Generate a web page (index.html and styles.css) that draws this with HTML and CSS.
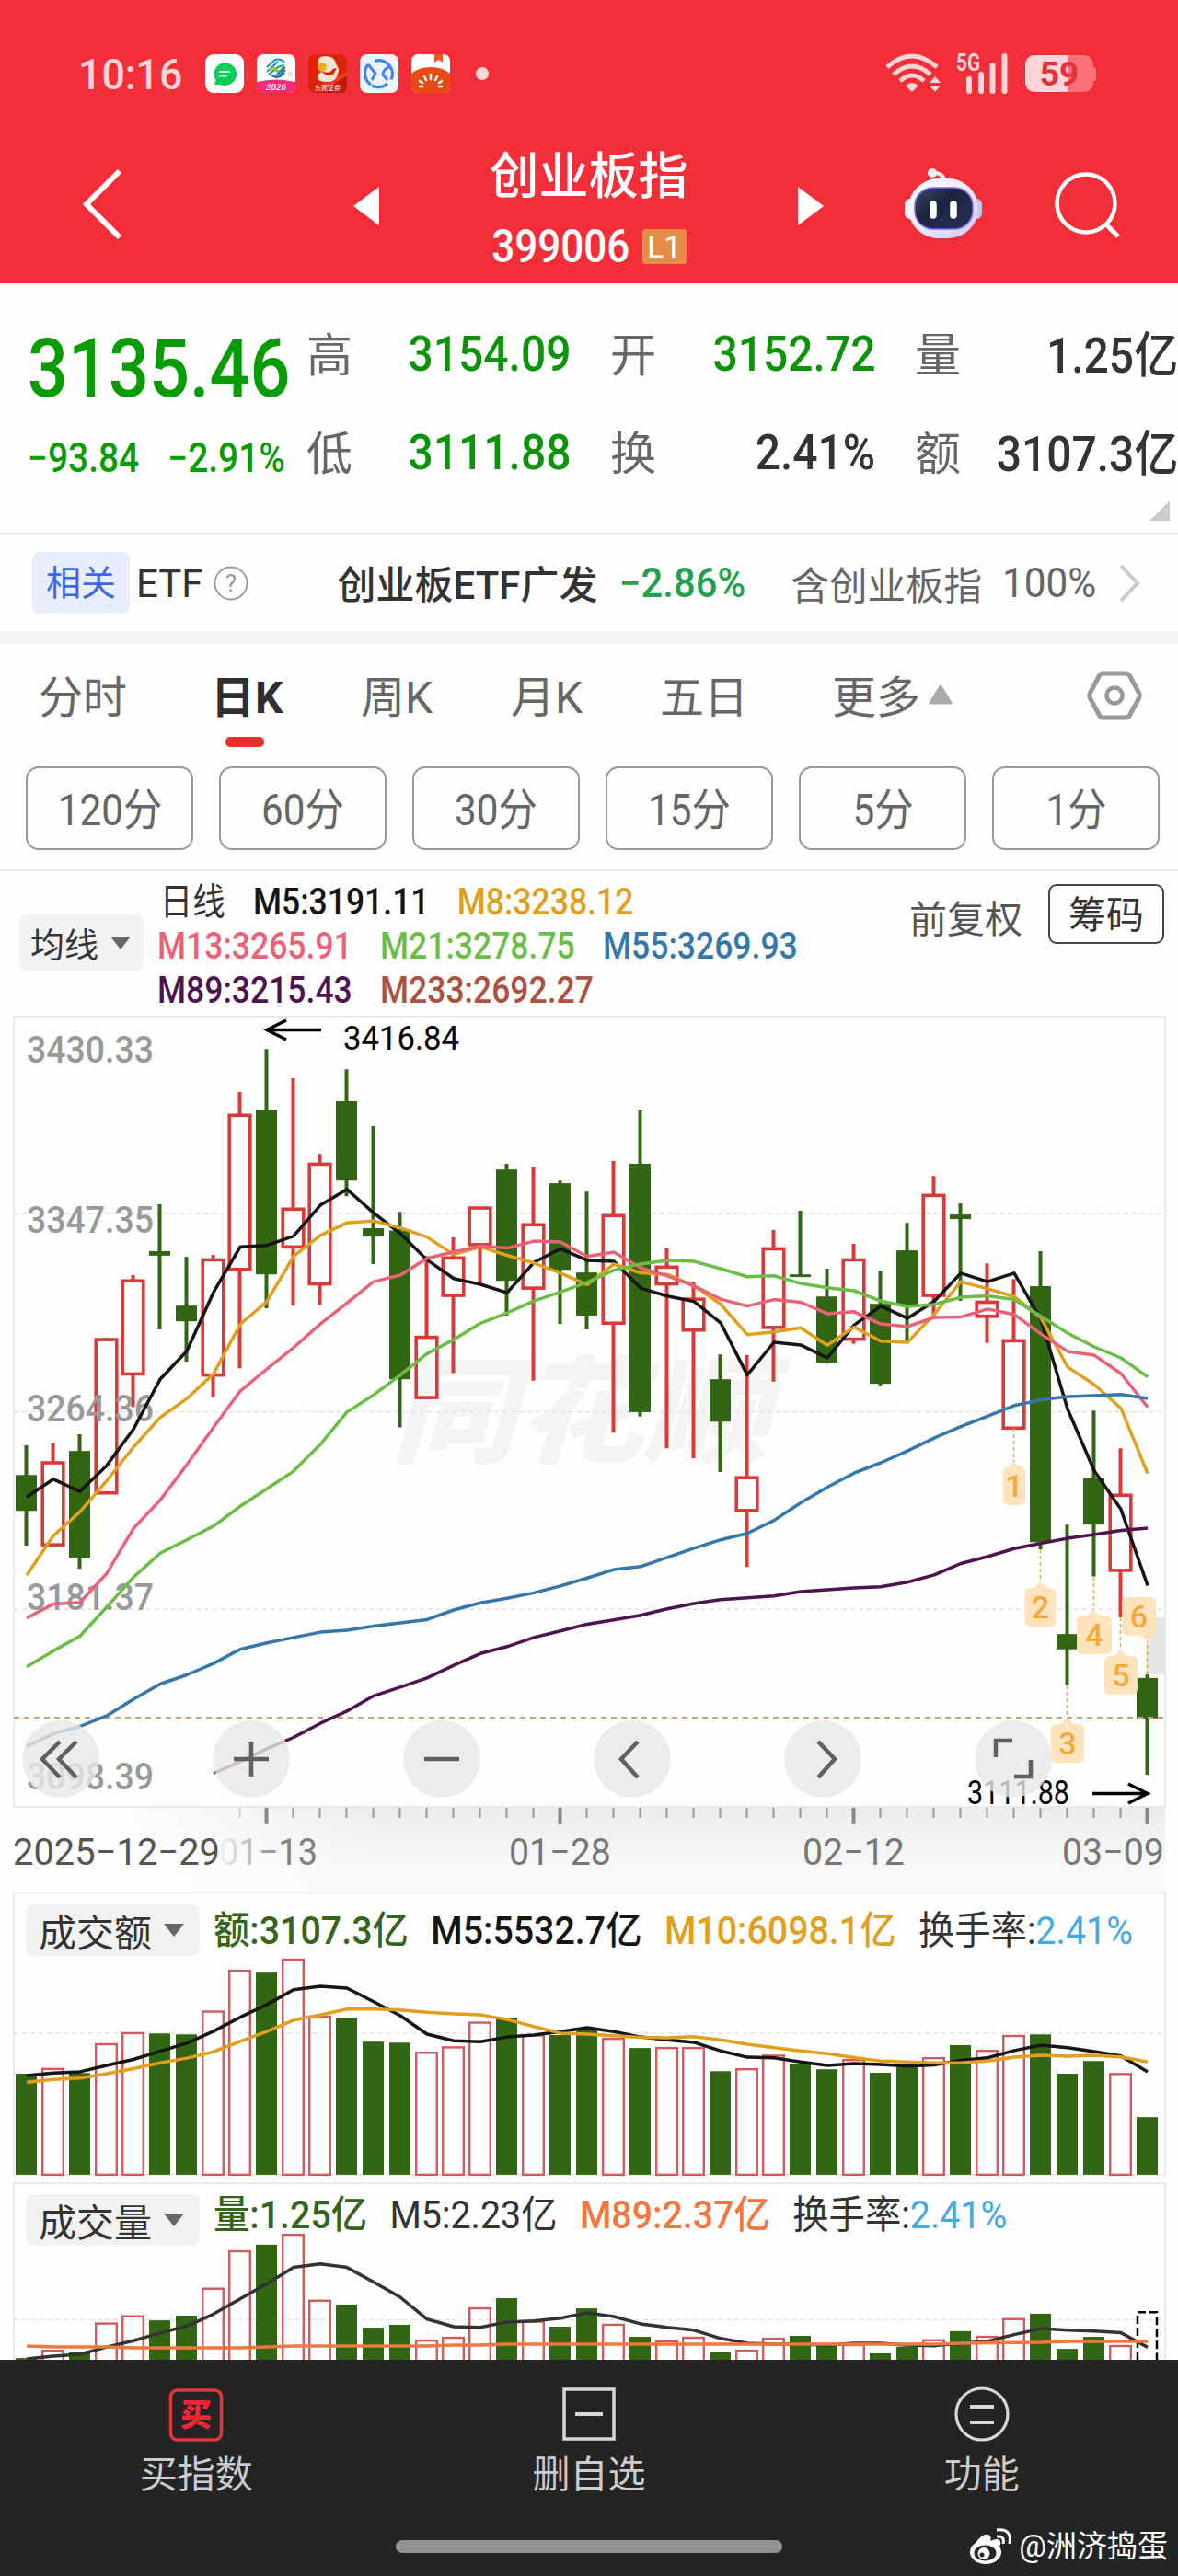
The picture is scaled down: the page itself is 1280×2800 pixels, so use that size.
FILE: index.html
```html
<!DOCTYPE html>
<html lang="zh-CN">
<head>
    <meta charset="UTF-8">
    <meta name="viewport" content="width=device-width, initial-scale=1.0">
    <title>创业板指 399006</title>
    <link rel="stylesheet" href="styles.css">
</head>
<body>
    <header class="header">
        <div class="status-bar">
            <span class="clock">10:16</span>
            <div class="app-icons">
                <svg viewBox="0 0 42 42"><rect width="42" height="42" rx="9" fill="#fff"/><path d="M21 9a13 12.500 0 1 1-5 24l-6 0 1.500-5A13 12.500 0 0 1 21 9z" fill="#08cf57"/><path d="M15 19h12M15 23.500h9" stroke="#c9f5d9" stroke-width="1.800"/></svg>
                <svg viewBox="0 0 42 42"><rect width="42" height="42" rx="7" fill="#fff"/><path d="M0 30q21-5 42 0v5q0 7-7 7H7q-7 0-7-7z" fill="#f52a78"/><g fill="none" stroke-width="2"><path d="M11 14l9-8q6-2 10 3M11 19l12-11M13 22l5-4q6-6 12-6" stroke="#1a8fc4"/><path d="M14 18q4-6 7-1t8-4" stroke="#8cc63f" stroke-width="3"/><path d="M31 14l-12 11M30 20q-6 8-14 3M31 17l-8 8" stroke="#1f6fb5"/></g><circle cx="7" cy="7" r="3" fill="none" stroke="#f9a9c4" stroke-dasharray="1 1"/><circle cx="36" cy="22" r="2" fill="none" stroke="#f9a9c4"/><text x="21" y="39" class="ico-year">2026</text></svg>
                <svg viewBox="0 0 42 42"><rect width="42" height="42" rx="7" fill="#dd2408"/><path d="M12 42L42 20v15q0 7-7 7z" fill="#c01a08"/><path d="M14 33L42 19v4L22 36z" fill="#ee3a20"/><path d="M11 13q-3-11 8-11 9 0 11 8l2 4q2 3 0 7-1 9-12 9-10 0-10-6 0-3 5-5 5 6 12 3l4-7q-4 0-7 4-8 3-13-6z" fill="#f6e5d3"/><circle cx="15" cy="14" r="5" fill="#f3ad1c"/><text x="21" y="39" class="ico-brand">东莞证券</text></svg>
                <svg viewBox="0 0 42 42"><rect width="42" height="42" rx="8" fill="#f0f4fc"/><path d="M9 11a15 15 0 0 0 3 22M16 7.500a15 14.500 0 0 1 18 20M30 32a15 15 0 0 1-17 2" fill="none" stroke="#3f86ea" stroke-width="3.200"/><path d="M9 11l8 10-4 7M34 13q-8 2-9 9l5 6" fill="none" stroke="#3f86ea" stroke-width="3"/></svg>
                <svg viewBox="0 0 42 42"><rect width="42" height="42" rx="7" fill="#fff"/><path d="M0 21q8-7 21-7t21 7v14q0 7-7 7H7q-7 0-7-7z" fill="#e84c16"/><path d="M25 0h9v9l-4.500-3L25 9z" fill="#ec5a20"/><path d="M21 22v5M14 24l2 4M28 24l-2 4M9 29l3 2M33 29l-3 2M9 35h3M30 35h3" stroke="#fff" stroke-width="2.500" stroke-linecap="round"/></svg>
                <i class="more-dot"></i>
            </div>
            <div class="status-right">
                <svg class="wifi" viewBox="0 0 60 42"><g fill="none" stroke="#ffd5d8" stroke-width="5"><path d="M2 14q27-24 54 0"/><path d="M9 22q20-18 40 0"/><path d="M16 29q13-12 26 0"/></g><path d="M22 34q7-6 14 0l-7 7z" fill="#ffd5d8"/><path d="M48 31l6-7 6 7zM48 34h12l-6 7z" fill="#ffd5d8"/></svg>
                <svg class="signal" viewBox="0 0 56 44"><text x="0" y="19" textLength="26" lengthAdjust="spacingAndGlyphs" class="net">5G</text><path d="M14 28v13M27 23v18M39.500 13v28M52.500 3v38" stroke="#ffd5d8" stroke-width="6" stroke-linecap="round"/></svg>
                <div class="battery">59</div>
            </div>
        </div>
        <div class="nav">
            <svg class="nav-back" viewBox="0 0 46 80"><path d="M42 4L6 40l36 36" fill="none" stroke="#fff" stroke-width="6"/></svg>
            <svg class="nav-prev" viewBox="0 0 28 42"><path d="M28 0v42L0 21z" fill="#fff"/></svg>
            <div class="title">
                <h1>创业板指</h1>
                <div class="code"><span>399006</span><em>L1</em></div>
            </div>
            <svg class="nav-next" viewBox="0 0 28 42"><path d="M0 0v42l28-21z" fill="#fff"/></svg>
            <svg class="robot" viewBox="0 0 84 78">
                <defs>
                    <linearGradient id="shell" x1="0" y1="0" x2="1" y2="1"><stop offset="0" stop-color="#fff"/><stop offset=".5" stop-color="#eceaff"/><stop offset="1" stop-color="#c9c8f4"/></linearGradient>
                    <linearGradient id="visor" x1="0" y1="0" x2="1" y2="1"><stop offset="0" stop-color="#3e4a66"/><stop offset=".4" stop-color="#1c2540"/><stop offset="1" stop-color="#26305a"/></linearGradient>
                </defs>
                <path d="M31 6q12 0 12 10" fill="none" stroke="#e9e4fa" stroke-width="4"/><circle cx="30" cy="6" r="5" fill="#f4effc"/>
                <rect x="0" y="34" width="14" height="22" rx="6" fill="#f2f0ff"/><rect x="70" y="34" width="14" height="22" rx="6" fill="#c3c3ee"/>
                <rect x="4" y="12" width="76" height="65" rx="33" fill="url(#shell)"/>
                <rect x="11" y="22" width="63" height="45" rx="20" fill="url(#visor)" stroke="#7b6be0" stroke-width="1.500"/>
                <path d="M31 40v12M53 40v12" stroke="#fff" stroke-width="7.500" stroke-linecap="round"/>
            </svg>
            <svg class="search" viewBox="0 0 76 76"><circle cx="36" cy="35" r="31.500" fill="none" stroke="#fff" stroke-width="4.500"/><path d="M57 57l14 14" stroke="#fff" stroke-width="5"/></svg>
        </div>
    </header>

    <section class="quote">
        <div class="price">
            <strong>3135.46</strong>
            <p><span>−93.84</span><span>−2.91%</span></p>
        </div>
        <dl class="stats">
            <div><dt>高</dt><dd class="down">3154.09</dd></div>
            <div><dt>开</dt><dd class="down">3152.72</dd></div>
            <div><dt>量</dt><dd>1.25亿</dd></div>
            <div><dt>低</dt><dd class="down">3111.88</dd></div>
            <div><dt>换</dt><dd>2.41%</dd></div>
            <div><dt>额</dt><dd>3107.3亿</dd></div>
        </dl>
        <i class="corner"></i>
    </section>

    <section class="etf">
        <span class="chip">相关</span>
        <span class="etf-label">ETF</span>
        <svg class="help" viewBox="0 0 38 38"><circle cx="19" cy="19" r="17.500" fill="none" stroke="#999" stroke-width="1.800"/><text x="19" y="28" class="help-mark">?</text></svg>
        <span class="etf-name">创业板ETF广发</span>
        <span class="etf-rate">−2.86%</span>
        <span class="etf-has">含创业板指</span>
        <span class="etf-pct">100%</span>
        <svg class="etf-more" viewBox="0 0 24 42"><path d="M2 2l18 19L2 40" fill="none" stroke="#ccc" stroke-width="4"/></svg>
    </section>

    <nav class="tabs">
        <a>分时</a>
        <a class="active">日K</a>
        <a>周K</a>
        <a>月K</a>
        <a>五日</a>
        <a class="more">更多<svg viewBox="0 0 26 22"><path d="M13 2L24 20H2z" fill="#aaa" stroke="#aaa" stroke-width="3" stroke-linejoin="round"/></svg></a>
        <svg class="setting" viewBox="0 0 58 54"><path d="M17 3h24q3 0 4.500 2.500l10 18.500q1.500 3 0 6l-10 18.500Q44 51 41 51H17q-3 0-4.500-2.500L2.500 30q-1.500-3 0-6l10-18.500Q14 3 17 3z" fill="none" stroke="#999" stroke-width="5"/><circle cx="29" cy="27" r="8.500" fill="none" stroke="#999" stroke-width="4.500"/></svg>
    </nav>

    <div class="intervals">
        <button><span>120分</span></button>
        <button><span>60分</span></button>
        <button><span>30分</span></button>
        <button><span>15分</span></button>
        <button><span>5分</span></button>
        <button><span>1分</span></button>
    </div>

    <section class="ma-bar">
        <div class="select ma-select">均线<i class="caret"></i></div>
        <div class="ma-list">
            <p><b class="c-text">日线</b><b class="c-m5">M5:3191.11</b><b class="c-m8">M8:3238.12</b></p>
            <p><b class="c-m13">M13:3265.91</b><b class="c-m21">M21:3278.75</b><b class="c-m55">M55:3269.93</b></p>
            <p><b class="c-m89">M89:3215.43</b><b class="c-m233">M233:2692.27</b></p>
        </div>
        <span class="adjust">前复权</span>
        <span class="chips-btn">筹码</span>
    </section>

    <section class="kline">
        <svg id="kline" width="1280" height="860"></svg>
        <div class="controls">
            <button><svg viewBox="0 0 84 84"><path d="M41 23L22 42l19 20M59 23L40 42l19 20"/></svg></button>
            <button><svg viewBox="0 0 84 84"><path d="M42 23v38M23 42h38"/></svg></button>
            <button><svg viewBox="0 0 84 84"><path d="M23 42h38"/></svg></button>
            <button><svg viewBox="0 0 84 84"><path d="M48 23L30 42l18 20"/></svg></button>
            <button><svg viewBox="0 0 84 84"><path d="M37 23l18 19-18 20"/></svg></button>
            <button><svg viewBox="0 0 84 84"><path d="M23 40V22h18M61 43v18H43"/></svg></button>
        </div>
    </section>

    <svg id="axis" class="axis" width="1280" height="91"></svg>

    <section class="volume amount">
        <svg id="amount" width="1280" height="316"></svg>
        <div class="volume-head">
            <div class="select">成交额<i class="caret"></i></div>
            <p><b class="c-green">额:3107.3亿</b><b class="c-m5">M5:5532.7亿</b><b class="c-m8">M10:6098.1亿</b><b class="c-text">换手率:<span class="c-sky">2.41%</span></b></p>
        </div>
    </section>

    <section class="volume turnover">
        <svg id="volume" width="1280" height="193"></svg>
        <div class="volume-head">
            <div class="select">成交量<i class="caret"></i></div>
            <p><b class="c-green">量:1.25亿</b><b class="c-text">M5:2.23亿</b><b class="c-m89v">M89:2.37亿</b><b class="c-text">换手率:<span class="c-sky">2.41%</span></b></p>
        </div>
    </section>

    <footer class="footer">
        <div class="actions">
            <a>
                <svg viewBox="0 0 60 60"><rect x="2.500" y="3" width="55" height="54" rx="7" fill="none" stroke="#e0353d" stroke-width="3.500"/><text x="30" y="42" class="buy-mark">买</text></svg>
                买指数
            </a>
            <a>
                <svg viewBox="0 0 60 60"><rect x="3" y="2" width="54" height="54" fill="none" stroke="#d8d8d8" stroke-width="3.500"/><path d="M15 29h30" stroke="#d8d8d8" stroke-width="4"/></svg>
                删自选
            </a>
            <a>
                <svg viewBox="0 0 60 60"><circle cx="30" cy="29" r="28" fill="none" stroke="#d8d8d8" stroke-width="3.200"/><path d="M17 21h26M17 38h26" stroke="#d8d8d8" stroke-width="4"/></svg>
                功能
            </a>
        </div>
        <i class="home-bar"></i>
        <div class="author">
            <svg viewBox="0 0 46 40"><ellipse cx="17" cy="26" rx="17" ry="13" fill="#fff"/><path d="M6 16Q14 5 20 7q4 2 2 7 9-4 11 0 1 3-1 6z" fill="#fff"/><ellipse cx="16.500" cy="27" rx="12" ry="8.500" fill="#242424"/><circle cx="15" cy="27.500" r="6.500" fill="#fff"/><circle cx="13" cy="29" r="2.500" fill="#242424"/><path d="M29 9q9-1 7 8M29 2q17-2 14 15" fill="none" stroke="#fff" stroke-width="3"/></svg>
            @洲济捣蛋
        </div>
    </footer>

    <script src="chart.js"></script>
</body>
</html>
```
FILE: styles.css
```css
* {
    margin: 0;
    padding: 0;
    box-sizing: border-box;
}

body {
    width: 1280px;
    height: 2800px;
    overflow: hidden;
    background: #fefefe;
    color: #333;
    font-family: Roboto, "Noto Sans CJK SC", sans-serif;
}

svg {
    display: block;
    flex: none;
    overflow: visible;
}

b, em, i {
    font-style: normal;
    font-weight: 400;
}

button {
    font-family: inherit;
    background: none;
    border: none;
}

/* 顶部 */
.header {
    height: 308px;
    background: #f22f38;
    color: #fff;
}

.status-bar {
    display: flex;
    align-items: center;
    height: 160px;
    padding: 0 92px 0 85px;
}

.clock {
    width: 138px;
    color: #ffd5d8;
    font-size: 47px;
    font-weight: 500;
    transform: scaleX(0.95);
    transform-origin: left;
}

.app-icons {
    display: flex;
    align-items: center;
    gap: 14px;
}

.app-icons svg {
    width: 42px;
    height: 42px;
}

.ico-year {
    font: italic 700 11px "Liberation Serif", serif;
    fill: #fff;
    text-anchor: middle;
}

.ico-brand {
    font: 7px "Noto Sans CJK SC", sans-serif;
    fill: #fff;
    text-anchor: middle;
}

.more-dot {
    width: 14px;
    height: 14px;
    margin-left: 14px;
    border-radius: 50%;
    background: #ffd5d8;
}

.status-right {
    display: flex;
    align-items: center;
    gap: 16px;
    margin-left: auto;
}

.wifi {
    width: 60px;
    height: 42px;
}

.signal {
    width: 58px;
    height: 44px;
    margin-right: 2px;
}

.net {
    font: 700 25px Roboto, sans-serif;
    fill: #ffd5d8;
}

.battery {
    position: relative;
    width: 74px;
    height: 40px;
    border-radius: 10px;
    background: linear-gradient(90deg, #ffd5d8 46px, #f97177 46px);
    color: #e52f39;
    font-size: 37px;
    font-weight: 700;
    line-height: 42px;
    text-align: center;
}

.battery::after {
    content: "";
    position: absolute;
    right: -3px;
    top: 13px;
    width: 4px;
    height: 15px;
    border-radius: 0 3px 3px 0;
    background: #f97177;
}

.nav {
    display: flex;
    align-items: center;
    height: 124px;
    padding-left: 88px;
}

.nav-back { width: 46px; height: 80px; }
.nav-prev { width: 28px; height: 42px; margin: 4px 0 0 250px; }
.nav-next { width: 28px; height: 42px; margin-top: 4px; }
.robot { width: 84px; height: 78px; margin: -2px 0 0 88px; }
.search { width: 76px; height: 76px; margin: 4px 0 0 77px; }

.title {
    width: 455px;
    padding-top: 17px;
    text-align: center;
}

.title h1 {
    font-size: 54px;
    font-weight: 500;
    line-height: 75px;
}

.code {
    display: flex;
    justify-content: center;
    align-items: center;
    height: 76px;
    gap: 7px;
}

.code span {
    margin-left: -9px;
    margin-right: -4px;
    font-size: 50px;
    font-weight: 500;
    transform: scaleX(0.88);
}

.code em {
    width: 48px;
    height: 38px;
    border-radius: 3px;
    background: #e58c48;
    font-size: 34px;
    line-height: 38px;
}

/* 行情 */
.quote {
    position: relative;
    display: flex;
    height: 273px;
    border-bottom: 2px solid #e9e9e9;
}

.price {
    width: 333px;
    padding: 37px 0 0 30px;
    color: #079b04;
}

.price strong {
    display: block;
    font-size: 89px;
    font-weight: 500;
    line-height: 112px;
    transform: scaleX(0.87);
    transform-origin: left;
    white-space: nowrap;
}

.price p {
    display: flex;
    gap: 35px;
    font-size: 44px;
    font-weight: 500;
    line-height: 82px;
    white-space: nowrap;
    transform: scaleX(0.885);
    transform-origin: left;
}

.stats {
    display: grid;
    grid-template-columns: 284px 285px 283px;
    grid-auto-rows: 107px;
    column-gap: 46px;
    padding-top: 23px;
}

.stats div {
    display: flex;
    justify-content: space-between;
    align-items: center;
}

.stats dt {
    margin-top: -6px;
    color: #666;
    font-size: 50px;
    width: 50px;
    flex: none;
}

.stats dd {
    margin-right: -3px;
    font-size: 53px;
    font-weight: 500;
    white-space: nowrap;
    transform: scaleX(0.905);
    transform-origin: right;
}

.stats div:nth-child(3n) dd {
    margin-top: -5px;
}

.stats .down {
    color: #0b9409;
}

.corner {
    position: absolute;
    right: 9px;
    bottom: 13px;
    border: solid transparent;
    border-width: 11px;
    border-right-color: #ccc;
    border-bottom-color: #ccc;
}

/* 相关ETF */
.etf {
    display: flex;
    align-items: center;
    height: 105px;
    padding-left: 35px;
    font-size: 42px;
    white-space: nowrap;
}

.chip {
    width: 106px;
    height: 67px;
    border-radius: 8px;
    background: #e8eefd;
    color: #3b69e6;
    font-size: 38px;
    line-height: 68px;
    text-align: center;
}

.etf-label { margin: 2px 0 0 7px; }
.help { width: 38px; height: 38px; margin-left: 11px; }
.help-mark { font: 26px Roboto, sans-serif; fill: #999; text-anchor: middle; }
.etf-name { width: 306px; margin-left: 97px; font-size: 42px; font-weight: 500; margin-top: -2px; }

.etf-rate {
    width: 187px;
    color: #1fa14f;
    font-size: 44px;
    font-weight: 500;
    transform: scaleX(0.95);
    transform-origin: left;
}

.etf-has {
    width: 229px;
    color: #666;
    font-size: 41.5px;
}

.etf-pct {
    width: 127px;
    color: #666;
    font-size: 45px;
    transform: scaleX(0.94);
    transform-origin: left;
}

.etf-more {
    width: 24px;
    height: 42px;
}

/* 周期 */
.tabs {
    display: flex;
    height: 147px;
    padding: 13px 0 0 42px;
    border-top: 14px solid #f4f4f4;
    color: #666;
    font-size: 48px;
    line-height: 92px;
    white-space: nowrap;
}

.tabs a:nth-child(1) { width: 187px; }
.tabs a:nth-child(2) { width: 163px; }
.tabs a:nth-child(3) { width: 163px; }
.tabs a:nth-child(4) { width: 162px; }
.tabs a:nth-child(5) { width: 187px; }

.tabs .active {
    position: relative;
    color: #2f2f2f;
    font-weight: 700;
}

.tabs .active::after {
    content: "";
    position: absolute;
    left: 16px;
    top: 88px;
    width: 42px;
    height: 11px;
    border-radius: 5px;
    background: #e8312f;
}

.tabs .more {
    display: flex;
    width: 278px;
    gap: 9px;
}

.tabs .more svg {
    width: 26px;
    height: 22px;
    margin-top: 31px;
}

.setting {
    width: 58px;
    height: 54px;
    margin-top: 16px;
}

.intervals {
    display: flex;
    gap: 28px;
    height: 114px;
    padding: 0 20px 21px 28px;
    border-bottom: 2px solid #e6e6e6;
}

.intervals button {
    width: 182px;
    border: 2px solid #999;
    border-radius: 14px;
    color: #666;
    font-size: 48px;
    line-height: 91px;
}

.intervals span {
    display: inline-block;
    transform: scaleX(0.88);
}

/* 均线 */
.ma-bar {
    display: flex;
    height: 157px;
    padding: 10px 14px 0 21px;
    font-size: 37px;
    white-space: nowrap;
}

.select {
    display: flex;
    align-items: center;
    justify-content: space-between;
    background: #f2f2f2;
    border-radius: 8px;
}

.caret {
    border: solid transparent;
    border-width: 14px 11px 0;
    border-top-color: #666;
}

.ma-select {
    width: 135px;
    height: 61px;
    margin-top: 37px;
    padding: 0 14px 0 12px;
}

.ma-list {
    width: 811px;
    margin-left: 15px;
}

.ma-list p {
    display: flex;
    gap: 34px;
    font-size: 40px;
    line-height: 48px;
    transform: scaleX(0.888);
    transform-origin: left;
}

.ma-list b {
    font-weight: 500;
}

.ma-list .c-text {
    padding-left: 3px;
    font-weight: 400;
}

.adjust {
    width: 157px;
    padding-left: 6px;
    color: #555;
    font-size: 41px;
    line-height: 86px;
}

.chips-btn {
    width: 126px;
    height: 65px;
    margin-top: 4px;
    border: 2px solid #444;
    border-radius: 9px;
    font-size: 41px;
    line-height: 64px;
    text-align: center;
}

.c-text { color: #333; }
.c-m5 { color: #151515; }
.c-m8 { color: #e0a01e; }
.c-m13 { color: #ea6277; }
.c-m21 { color: #6cbd46; }
.c-m55 { color: #3577a8; }
.c-m89 { color: #4e144f; }
.c-m233 { color: #ac5040; }
.c-m89v { color: #ef7740; }
.c-green { color: #36641c; }
.c-sky { color: #45a9e5; }

/* K线 */
.kline {
    position: relative;
    height: 861px;
}

.controls {
    position: absolute;
    left: 24px;
    top: 766px;
    display: flex;
    gap: 123px;
}

.controls button {
    width: 84px;
    height: 84px;
    border-radius: 50%;
    background: rgba(231, 231, 231, 0.8);
}

.controls path {
    fill: none;
    stroke: #606060;
    stroke-width: 4.5;
}

.frame { fill: none; stroke: #e9e9e9; stroke-width: 2; }
.grid { stroke: #e2e2e2; stroke-width: 1.5; stroke-dasharray: 5 4; }
.now { stroke: #c4a476; stroke-width: 2; stroke-dasharray: 6 5; }
.scale { font-size: 41px; font-weight: 500; fill: #999; }
.peak { font-size: 36px; fill: #000; }
.watermark { font: italic 900 126px "Noto Sans CJK SC", sans-serif; fill: #f4f4f4; }
.up { fill: none; stroke: #d93a38; stroke-width: 3.6; }
.fall { fill: #326612; stroke: none; }
.wick-up { stroke: #d93a38; stroke-width: 4; }
.wick-fall { stroke: #326612; stroke-width: 4; }
.bar-up { fill: none; stroke: #d15a5a; stroke-width: 2.4; }
.line { fill: none; stroke-width: 3.5; stroke-linejoin: round; }
.arrow { fill: none; stroke: #000; stroke-width: 3.4; }
.turn { fill: #fee1b8; }
.turn-mark { opacity: 0.93; }
.turn-line { stroke: #dcae4b; stroke-width: 1.5; stroke-dasharray: 4 3; }
.turn-text { font-size: 34px; font-weight: 500; fill: #f3a32b; text-anchor: middle; }
.tick { stroke: #999; stroke-width: 2; }
.tick-major { stroke: #888; stroke-width: 4; }
.date { font-size: 41px; fill: #777; }
.date-faded { font-size: 41px; fill: url(#ink); }
.date-start { font-size: 41px; fill: #555; }

.axis {
    height: 91px;
}

/* 成交额 / 成交量 */
.volume {
    display: grid;
}

.volume > * {
    grid-area: 1 / 1;
}

.volume svg {
    overflow: hidden;
}

.amount { height: 316px; }
.turnover { height: 193px; overflow: hidden; }

.volume-head {
    display: flex;
    padding: 14px 0 0 28px;
    white-space: nowrap;
}

.volume-head .select {
    width: 189px;
    height: 56px;
    padding: 0 17px 0 14px;
    font-size: 41px;
    flex: none;
}

.turnover .volume-head { padding-top: 13px; }

.volume-head p {
    display: flex;
    gap: 26px;
    height: 56px;
    margin-left: 15px;
    font-size: 42px;
    line-height: 58px;
    transform: scaleX(0.937);
    transform-origin: left;
}

.volume-head b {
    font-weight: 500;
}

.volume-head .c-text {
    font-weight: 400;
}

.turnover .volume-head p {
    line-height: 46px;
}

/* 底部 */
.footer {
    position: relative;
    height: 235px;
    background: #242424;
    color: #ccc;
}

.actions {
    display: grid;
    grid-template-columns: repeat(3, 1fr);
    padding-top: 30px;
}

.actions a {
    display: flex;
    flex-direction: column;
    align-items: center;
    font-size: 41px;
    line-height: 70px;
}

.actions svg {
    width: 60px;
    height: 60px;
}

.buy-mark {
    font: 900 34px "Noto Sans CJK SC", sans-serif;
    fill: #fb2435;
    text-anchor: middle;
}

.home-bar {
    position: absolute;
    left: 430px;
    bottom: 25px;
    width: 420px;
    height: 14px;
    border-radius: 7px;
    background: #929292;
}

.author {
    position: absolute;
    right: 11px;
    bottom: 10px;
    display: flex;
    align-items: center;
    gap: 7px;
    color: #fff;
    font-size: 33px;
    line-height: 44px;
}

.author svg {
    width: 46px;
    height: 40px;
}
```
FILE: chart.js
```javascript
const STEP = 29;
const LEFT = 28.5;
const colX = i => LEFT + STEP * i;

// [涨跌, 最高, 实体上沿, 实体下沿, 最低]
const candles = [
    ['G', 1160, 1238, 1332, 1423], ['R', 1153, 1206, 1421, 1425], ['G', 1131, 1175, 1455, 1484],
    ['R', 878, 883, 1285, 1285], ['R', 714, 729, 973, 1060], ['G', 528, 651, 663, 856],
    ['G', 666, 794, 835, 941], ['R', 661, 674, 976, 1034], ['R', 234, 295, 699, 958],
    ['G', 121, 280, 712, 801], ['R', 198, 541, 640, 794], ['R', 396, 423, 737, 791],
    ['G', 174, 258, 466, 507], ['G', 323, 591, 613, 685], ['G', 548, 597, 987, 1113],
    ['R', 664, 877, 1035, 1035], ['R', 615, 669, 767, 971], ['R', 538, 538, 634, 738],
    ['G', 422, 437, 729, 820], ['R', 432, 582, 748, 991], ['G', 466, 473, 700, 842],
    ['G', 495, 707, 820, 856], ['R', 415, 558, 840, 1127], ['G', 282, 422, 1073, 1085],
    ['R', 644, 693, 737, 1168], ['R', 731, 777, 858, 1194], ['G', 922, 987, 1098, 1230],
    ['R', 924, 1245, 1331, 1479], ['R', 596, 645, 851, 993], ['G', 545, 712, 719, 719],
    ['G', 697, 770, 943, 946], ['R', 632, 674, 882, 894], ['G', 702, 789, 999, 1003],
    ['G', 577, 649, 795, 893], ['R', 454, 505, 767, 829], ['G', 526, 555, 567, 781],
    ['R', 683, 785, 822, 892], ['R', 724, 886, 1115, 1118], ['G', 651, 743, 1414, 1433],
    ['G', 1368, 1655, 1695, 1789], ['G', 1069, 1247, 1368, 1504], ['R', 1168, 1291, 1488, 1611],
    ['G', 1761, 1770, 1876, 2024]
];

const averages = {
    '#151515': [1296, 1249, 1281, 1213, 1118, 987, 913, 759, 640, 636, 612, 531, 489, 551, 605, 674, 723, 738, 760, 681, 645, 675, 678, 748, 769, 783, 839, 976, 890, 897, 931, 845, 795, 827, 783, 709, 731, 709, 830, 1065, 1227, 1328, 1528],
    '#e0a01e': [1501, 1397, 1334, 1253, 1165, 1087, 1038, 973, 843, 783, 665, 610, 577, 572, 590, 614, 660, 640, 662, 682, 709, 739, 685, 708, 712, 742, 790, 870, 863, 852, 898, 850, 887, 890, 817, 731, 750, 770, 826, 955, 1001, 1063, 1234],
    '#ea6277': [1613, 1576, 1572, 1496, 1378, 1304, 1211, 1113, 1018, 960, 904, 842, 787, 731, 714, 670, 653, 638, 643, 625, 627, 665, 654, 695, 716, 742, 777, 795, 778, 785, 815, 810, 842, 849, 825, 824, 803, 817, 868, 914, 924, 972, 1060],
    '#6cbd46': [1741, 1699, 1660, 1584, 1506, 1443, 1408, 1372, 1320, 1274, 1228, 1158, 1073, 1028, 976, 920, 883, 840, 813, 782, 758, 733, 701, 685, 675, 678, 697, 718, 716, 736, 747, 755, 782, 796, 791, 772, 768, 778, 822, 866, 902, 931, 981],
    '#3577a8': [1950, 1916, 1897, 1869, 1826, 1786, 1762, 1732, 1695, 1678, 1664, 1650, 1645, 1634, 1626, 1617, 1592, 1573, 1561, 1547, 1529, 1508, 1486, 1478, 1454, 1430, 1408, 1391, 1357, 1311, 1270, 1233, 1206, 1175, 1141, 1111, 1084, 1056, 1041, 1032, 1030, 1027, 1037],
    '#4e144f': [2020, 1989, 1956, 1926, 1889, 1857, 1817, 1794, 1770, 1737, 1706, 1688, 1664, 1647, 1629, 1618, 1606, 1589, 1575, 1565, 1560, 1555, 1544, 1539, 1534, 1531, 1519, 1500, 1470, 1452, 1431, 1417, 1404, 1394, 1383, 1377]
};

const amount = {
    bars: [621, 606, 619, 528, 493, 494, 497, 425, 296, 302, 261, 441, 444, 520, 523, 555, 538, 460, 444, 500, 499, 480, 511, 540, 540, 540, 613, 607, 564, 589, 607, 578, 618, 595, 572, 531, 549, 502, 497, 621, 581, 622, 758],
    lines: {
        '#151515': [627, 619, 615, 595, 576, 550, 525, 487, 443, 403, 356, 345, 351, 394, 438, 496, 517, 520, 505, 499, 488, 476, 488, 505, 514, 522, 549, 569, 571, 584, 595, 589, 592, 597, 593, 579, 571, 548, 531, 539, 551, 565, 615],
        '#e0a01e': [648, 639, 635, 621, 605, 587, 572, 552, 519, 488, 452, 436, 417, 417, 420, 427, 432, 435, 450, 472, 493, 496, 501, 506, 508, 504, 514, 528, 539, 549, 558, 570, 581, 584, 587, 587, 581, 569, 563, 566, 563, 568, 584]
    }
};

const volume = {
    bars: [1519, 1496, 1500, 1410, 1387, 1400, 1385, 1300, 1182, 1161, 1130, 1338, 1350, 1423, 1414, 1464, 1455, 1362, 1330, 1404, 1420, 1362, 1414, 1452, 1466, 1455, 1500, 1496, 1458, 1449, 1478, 1478, 1504, 1483, 1463, 1434, 1452, 1396, 1379, 1490, 1452, 1481, 1374],
    lines: {
        '#333333': [1522, 1513, 1507, 1484, 1464, 1440, 1418, 1380, 1332, 1284, 1233, 1222, 1233, 1279, 1327, 1396, 1420, 1422, 1405, 1402, 1393, 1376, 1388, 1411, 1422, 1431, 1457, 1472, 1475, 1475, 1478, 1472, 1472, 1478, 1480, 1472, 1466, 1445, 1426, 1431, 1434, 1439, 1485],
        '#ef7740': [1481, 1484, 1484, 1484, 1487, 1487, 1487, 1487, 1487, 1484, 1481, 1481, 1481, 1481, 1481, 1481, 1478, 1478, 1475, 1475, 1475, 1475, 1475, 1475, 1475, 1475, 1475, 1475, 1475, 1475, 1475, 1475, 1475, 1475, 1475, 1472, 1471, 1470, 1469, 1466, 1466, 1466, 1466]
    }
};

// 九转标记: 数字, 列, 虚线起点, 尖角y, 框x, 框y, 框宽
const turns = [
    [1, 37, 448, 485, 1090, 490, 24],
    [2, 38, 580, 615, 1113.5, 622, 34],
    [3, 39, 728, 763, 1142, 770, 36],
    [4, 40, 610, 646, 1170, 652, 38],
    [5, 41, 654, 690, 1200, 696, 36],
    [6, 42, 716, 680, 1219, 632, 37]
];

function hline(cls, y) {
    return `<line class="${cls}" x1="15" x2="1265" y1="${y}" y2="${y}"/>`;
}

function text(cls, x, y, width, str) {
    return `<text class="${cls}" x="${x}" y="${y}" textLength="${width}" lengthAdjust="spacingAndGlyphs">${str}</text>`;
}

function polyline(color, data, y) {
    // 长周期均线缺前几天，靠右对齐
    const offset = candles.length - data.length;
    const points = data.map((v, i) => `${colX(i + offset) + 0.5},${y(v).toFixed(1)}`).join(' ');
    return `<polyline class="line" stroke="${color}" points="${points}"/>`;
}

function drawKline() {
    const y = v => v / 2.412 - 14;
    let html = text('watermark', 424, 476, 412, '同花顺');
    html += '<rect class="frame" x="15" y="1" width="1251" height="859"/>';
    html += hline('grid', 215.3) + hline('grid', 430.4) + hline('grid', 645.3);
    html += '<rect x="1246" y="654" width="20" height="62" fill="#e6e6e6"/>';

    candles.forEach(([type, high, top, bottom, low], i) => {
        const x = colX(i);
        const t = y(top), b = y(bottom);
        if (type === 'G') {
            html += `<line class="wick-fall" x1="${x}" x2="${x}" y1="${y(high)}" y2="${y(low)}"/>`;
            html += `<rect class="fall" x="${x - 11.5}" y="${t}" width="23" height="${b - t}"/>`;
        } else {
            html += `<path class="wick-up" d="M${x} ${y(high)}V${t}M${x} ${b}V${y(low)}"/>`;
            html += `<rect class="up" x="${x - 11.3}" y="${t}" width="22.600" height="${b - t}"/>`;
        }
    });

    html += hline('now', 763);

    [['3430.33', 51], ['3347.35', 236], ['3264.36', 441], ['3181.37', 646], ['3098.39', 841]].forEach(([label, ty]) => {
        html += text('scale', 29, ty, 138, label);
    });

    for (const color in averages) {
        html += polyline(color, averages[color], y);
    }

    turns.forEach(([n, col, from, tip, bx, by, w]) => {
        const x = colX(col);
        const base = tip < by ? by + 1 : by + 41;
        html += `<line class="turn-line" x1="${x}" x2="${x}" y1="${from}" y2="${tip}"/>`;
        html += `<g class="turn-mark"><path class="turn" d="M${x - 8} ${base}L${x} ${tip}L${x + 8} ${base}z"/>`;
        html += `<rect class="turn" x="${bx}" y="${by}" width="${w}" height="42" rx="6"/>`;
        html += `<text class="turn-text" x="${bx + w / 2}" y="${by + 33}">${n}</text></g>`;
    });

    html += text('peak', 373, 37, 126, '3416.84');
    html += '<path class="arrow" d="M349 15.500H290M311 5L290 15.500l21 10.500"/>';
    html += text('peak', 1051, 857, 111, '3111.88');
    html += '<path class="arrow" d="M1187 845.500h60M1226 835l21 10.500-21 10.500"/>';
    document.getElementById('kline').innerHTML = html;
}

function drawAxis() {
    let html = `<defs>
        <linearGradient id="down" x1="0" y1="0" x2="0" y2="1"><stop offset="0" stop-color="#ececec"/><stop offset=".7" stop-color="#f8f8f8"/><stop offset="1" stop-color="#f9f9f9"/></linearGradient>
        <linearGradient id="fade" x1="0" x2="1"><stop offset="0" stop-color="#fefefe"/><stop offset=".08" stop-color="#fefefe"/><stop offset=".32" stop-color="#fefefe" stop-opacity="0"/></linearGradient>
        <linearGradient id="ink" gradientUnits="userSpaceOnUse" x1="238" x2="310" y1="0" y2="0"><stop offset="0" stop-color="#f4f4f4"/><stop offset="1" stop-color="#808080"/></linearGradient>
    </defs>
    <rect x="15" width="1251" height="91" fill="url(#down)"/>
    <rect x="14" width="1252" height="91" fill="url(#fade)"/>`;
    for (let i = 8; i < candles.length; i++) {
        const major = (i - 9) % 11 === 0;
        html += `<line class="${major ? 'tick-major' : 'tick'}" x1="${colX(i)}" x2="${colX(i)}" y1="0" y2="${major ? 18 : 11}"${i < 9 ? ' opacity=".4"' : ''}/>`;
    }
    html += text('date-faded', 238, 62, 107, '01−13');
    html += text('date-start', 14, 62, 225, '2025−12−29');
    html += text('date', 553, 62, 111, '01−28') + text('date', 872, 62, 111, '02−12') + text('date', 1154, 62, 111, '03−09');
    document.getElementById('axis').innerHTML = html;
}

function drawBars(id, data, top, bottom, mid, forecast) {
    const y = v => (v - top) / 2.904;
    let html = `<rect class="frame" x="15" y="1" width="1251" height="${y(bottom) - 1}"/>` + hline('grid', y(mid));
    data.bars.forEach((v, i) => {
        const x = colX(i);
        const h = y(bottom) - y(v);
        if (forecast && i === data.bars.length - 1) {
            html += `<rect x="${x - 10.5}" y="${y(v)}" width="21" height="${h}" fill="none" stroke="#000" stroke-width="2.500" stroke-dasharray="9 4"/>`;
        } else if (candles[i][0] === 'G') {
            html += `<rect class="fall" x="${x - 11.5}" y="${y(v)}" width="23" height="${h}"/>`;
        } else {
            html += `<rect class="bar-up" x="${x - 11.3}" y="${y(v)}" width="22.600" height="${h}"/>`;
        }
    });
    for (const color in data.lines) {
        html += polyline(color, data.lines[color], y);
    }
    document.getElementById(id).innerHTML = html;
}

drawKline();
drawAxis();
drawBars('amount', amount, 46, 940, 493);
drawBars('volume', volume, 964, 1860, 1398, true);
```
